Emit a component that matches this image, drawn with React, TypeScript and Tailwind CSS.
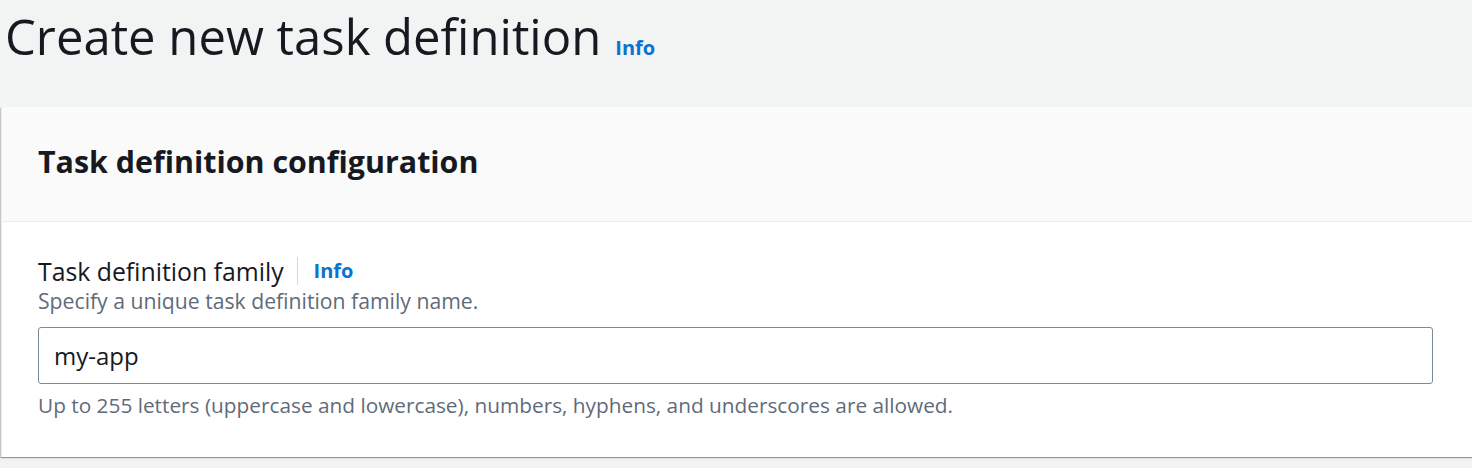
import React from "react";

const font = { fontFamily: '"Open Sans", "Noto Sans", sans-serif' };

export default function App() {
  return (
    <div className="min-h-screen w-full overflow-hidden bg-[#f2f3f3] text-[#16191f]" style={font}>
      <div className="h-[107px] pl-[5px] pt-[3px] flex items-baseline gap-[14px]">
        <h1 className="text-[49px] leading-[66px] font-normal">Create new task definition</h1>
        <a className="text-[20px] font-bold text-[#0972d3]">Info</a>
      </div>
      <div className="ml-[1px] w-[1472px] bg-white border-l border-[#eaeded] shadow-[0_1px_1px_0_rgba(0,28,36,0.3),-1px_1px_1px_0_rgba(0,28,36,0.15)]">
        <div className="h-[115px] bg-[#fafafa] border-b border-[#eaeded] pl-[36px] pb-[5px] flex items-center">
          <h2 className="text-[30.4px] font-bold leading-[40px]">Task definition configuration</h2>
        </div>
        <div className="pl-[36px] pr-[40px] pt-[32px] pb-[39px]">
          <div className="flex items-center h-[34px]">
            <span className="text-[24.8px] leading-[34px]">Task definition family</span>
            <span className="ml-[13px] mr-[16px] w-px h-[28px] bg-[#d5dbdb]" />
            <a className="text-[20px] font-bold text-[#0972d3]">Info</a>
          </div>
          <p className="text-[21.2px] leading-[26px] text-[#5f6b7a]">Specify a unique task definition family name.</p>
          <div className="mt-[13px] h-[57px] border border-[#7d8998] rounded-[3px] flex items-center pl-[15px] text-[24px]">
            my-app
          </div>
          <p className="mt-[8px] text-[20.8px] leading-[26px] text-[#5f6b7a]">
            Up to 255 letters (uppercase and lowercase), numbers, hyphens, and underscores are allowed.
          </p>
        </div>
      </div>
    </div>
  );
}
